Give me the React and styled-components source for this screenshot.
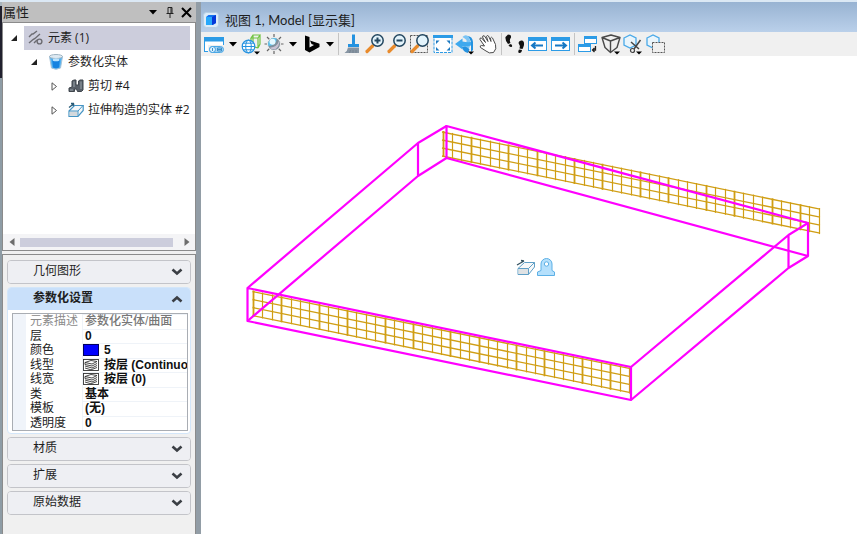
import React, { useState } from "react";
import styled, { createGlobalStyle } from "styled-components";

const GlobalStyle = createGlobalStyle`
  * {
    box-sizing: border-box;
  }

  body {
    margin: 0;
    background: #ffffff;
    font-family: "Open Sans", "Noto Sans CJK SC", sans-serif;
    font-size: 12px;
    color: #1e1e1e;
  }

  button {
    padding: 0;
    border: 0;
    background: none;
    color: inherit;
    font: inherit;
  }
`;

/* ---------- tree icons ---------- */

const ElementIcon = () => (
  <svg width="16" height="16" viewBox="0 0 16 16" fill="none" stroke="#6c6c72" strokeWidth="1.4">
    <path d="M1 7 L4 4 H5 L9 1" />
    <path d="M1 13 L5 9.500 L7 8.500 L12 4" />
    <circle cx="11.500" cy="11.500" r="2.400" />
    <path d="M6 13 L9 10" />
  </svg>
);

const SolidIcon = () => (
  <svg width="16" height="16" viewBox="0 0 16 16">
    <path d="M1.500 2.500 L3.500 14 Q8 16.500 12.500 14 L14.500 2.500Z" fill="#4fb2f3" stroke="#a9c4d8" />
    <path d="M4 5 L5 13.500 Q8 15 11 13.500 L12 5Z" fill="#1583e0" />
    <ellipse cx="8" cy="2.500" rx="6.500" ry="2" fill="#dfeaf2" stroke="#9fb4c2" />
    <ellipse cx="8" cy="5.800" rx="3.500" ry="1.500" fill="#b9e4ff" />
  </svg>
);

const CutIcon = () => (
  <svg width="16" height="16" viewBox="0 0 16 16">
    <path
      d="M4 3 L6 2 H8 V7 H10.500 V3 L12 2 H15 V12 L13.500 13.500 H9.500 L8.500 11 H6.500 V13.500 H1 V10 L4 9Z"
      fill="#596069"
      stroke="#3f454c"
    />
    <path d="M6 3.500 V9 M13 3.500 V11 M2 12 H5" stroke="#9aa3ab" fill="none" />
  </svg>
);

const ExtrudeIcon = () => (
  <svg width="16" height="16" viewBox="0 0 16 16">
    <path d="M1 9 L6.500 3.500 H15.200 V8.500 L10 14.500 H1Z" fill="#f5f8fa" stroke="#4594c4" strokeWidth="1.200" />
    <path d="M1.600 9.500 H9.500 V13.900 H1.600Z" fill="#d3d8dc" />
    <path d="M1 9 H10 L15 3.500 M10 9 V14" fill="none" stroke="#4594c4" />
    <path d="M1 5.500 L6 1.500 M6 1.500 H3 M6 1.500 L5 4" stroke="#285b78" strokeWidth="1.300" fill="none" />
  </svg>
);

/* ---------- property icons ---------- */

const LayersIcon = () => (
  <svg width="16" height="12" viewBox="0 0 16 12" fill="none" stroke="#333" strokeWidth="0.900">
    <rect x="0.500" y="0.500" width="15" height="11" fill="#fff" />
    <path d="M2 3.500 L8 1.500 L14 2.500 L9 5Z M2 3.500 V5.500 L9 7 L14 4.500 M2 7 L9 9 L14 6.500 M2 9 L8 10.800 L14 8.500" />
  </svg>
);

const Chevron = ({ up }) => (
  <svg width="12" height="8" viewBox="0 0 12 8" fill="none" stroke="#3b3f45" strokeWidth="2.600">
    <path d={up ? "M1.500 6.500 L6 2.500 L10.500 6.500" : "M1.500 1.500 L6 5.500 L10.500 1.500"} />
  </svg>
);

/* ---------- toolbar icons, all on a 22px grid ---------- */

const ToolSvg = ({ children }) => (
  <svg width="22" height="22" viewBox="0 0 22 22" fill="none">
    {children}
  </svg>
);

const Corner = () => <path d="M14 18.500 H20 L17 21.500Z" fill="#000" />;

const Lens = ({ children }) => (
  <>
    <path d="M3 18.500 L8.500 13" stroke="#e98b2c" strokeWidth="3.200" strokeLinecap="round" />
    <circle cx="13.500" cy="7.500" r="5.700" fill="#e3f3fb" stroke="#22465f" strokeWidth="1.500" />
    {children}
  </>
);

const AttributesIcon = () => (
  <ToolSvg>
    <rect x="1.500" y="4.500" width="19" height="14" fill="#fff" stroke="#2c9be6" />
    <rect x="1" y="4" width="20" height="4.500" fill="#2c9be6" />
    <rect x="5" y="12" width="17" height="9" fill="#f0f0f0" />
    <rect x="6.500" y="13.500" width="14" height="6" rx="3" fill="#a7d4f3" stroke="#4aa8e6" />
    <circle cx="9.500" cy="16.500" r="3" fill="#dff1fc" stroke="#3a9fe4" />
    <path d="M9.500 15 V18 M14.500 15 V18 H18.500 V15Z M14.500 16.500 H18.500" stroke="#3a8fca" />
  </ToolSvg>
);

const DisplayStyleIcon = () => (
  <ToolSvg>
    <path
      d="M11 5 L13 2 H20 L18 5Z M11 5 V12 M18 5 V15 L20 11 V2 M13 2 V9 M11 13 L18 15"
      stroke="#70c342"
      strokeWidth="1.200"
    />
    <circle cx="8.500" cy="13.500" r="6.300" fill="#fff" stroke="#2492e0" strokeWidth="1.200" />
    <ellipse cx="8.500" cy="13.500" rx="2.800" ry="6.300" stroke="#2492e0" />
    <path d="M2.200 13.500 H14.800 M3.200 10.200 H13.800 M3.200 16.800 H13.800" stroke="#2492e0" />
    <Corner />
  </ToolSvg>
);

const SunIcon = () => (
  <ToolSvg>
    <path d="M11 1 V21 M1.500 11 H20.500 M4 4 L18 18 M18 4 L4 18" stroke="#666" strokeWidth="1.200" />
    <circle cx="11" cy="11" r="6.500" fill="#7f909c" stroke="#f0f0f0" />
    <path d="M5.500 13 A6 6 0 0 1 13.500 5.500 Q14 12 5.500 13Z" fill="#5cc4ef" />
    <circle cx="9.500" cy="8.800" r="3" fill="#e4f8ff" />
    <path d="M16 8 Q17 13 12 16.500 Q8 16.500 7 14.800 Q14 14 16 8Z" fill="#c9c1d2" />
  </ToolSvg>
);

const BingIcon = () => (
  <ToolSvg>
    <path d="M5 2.500 L9.500 4 V14.500 L14 12 L11.500 11 L10 7.500 L19.500 10.800 V14 L9.500 19.500 L5 17Z" fill="#000" />
  </ToolSvg>
);

const BrushIcon = () => (
  <ToolSvg>
    <path d="M11 1.500 H14 V11 H18 V14 H7 V11 H11Z" fill="#2492e0" />
    <path d="M7 14.500 H18 V20 H3.500 Q6.500 18 7 14.500Z" fill="#8795a3" />
    <path d="M8.500 20 L9.500 17 M12 20 V17 M15 20 V17" stroke="#74828f" />
  </ToolSvg>
);

const ZoomInIcon = () => (
  <ToolSvg>
    <Lens>
      <path d="M10.500 7.500 H16.500 M13.500 4.500 V10.500" stroke="#22465f" strokeWidth="2" />
    </Lens>
  </ToolSvg>
);

const ZoomOutIcon = () => (
  <ToolSvg>
    <Lens>
      <path d="M10.500 7.500 H16.500" stroke="#22465f" strokeWidth="2" />
    </Lens>
  </ToolSvg>
);

const WindowAreaIcon = () => (
  <ToolSvg>
    <rect x="1.500" y="2.500" width="17" height="17" stroke="#555" strokeDasharray="2 1" />
    <Lens />
  </ToolSvg>
);

const FitViewIcon = () => (
  <ToolSvg>
    <rect x="2" y="2.500" width="18" height="17" fill="#fff" stroke="#2c9be6" strokeDasharray="3 1" />
    <rect x="1" y="2" width="20" height="3" fill="#2c9be6" />
    <path
      d="M4 7.500 H7.500 L4 11Z M18 7.500 V11 L14.500 7.500Z M4 17.500 V14 L7.500 17.500Z M18 17.500 H14.500 L18 14Z"
      fill="#1c79c0"
    />
  </ToolSvg>
);

const RotateIcon = () => (
  <ToolSvg>
    <path d="M13 3 Q18.500 3 19 9 V17 L17 19 V10 Q16.500 5.500 13 3Z" fill="#2492e0" />
    <path d="M8.500 4 Q11 1 14 3 L16 7 V13 L14.500 17 L12.500 14 V7 Q11 5.500 8.500 4Z" fill="#7cc4f4" />
    <path d="M1 11 L8.500 5.500 V8.500 Q13 9.500 17 9 V12.500 Q12 14 8.500 13.500 V16.500Z" fill="#3fa9ee" />
    <path d="M8 14 Q9 19 14 20 L15.500 16.500 L12 13.500Z" fill="#2492e0" />
    <Corner />
  </ToolSvg>
);

const HandIcon = () => (
  <ToolSvg>
    <path
      d="M7.500 13 L3 6.500 Q2.500 4.500 4.500 5 L8.500 9.500 L5.500 4 Q5.500 2 7.500 3 L11 8.500 L9.500 3.500 Q10 1.800 11.500 3 L14 8.500 L13.500 5 Q14.500 3.500 15.500 5 L18.500 11.500 Q20 16 16.500 19.500 Q12 21 9 18 L3.500 14.500 Q2.500 12.500 4.500 12.500Z"
      fill="#fff"
      stroke="#4a4a4a"
    />
  </ToolSvg>
);

const WalkIcon = () => (
  <ToolSvg>
    <path d="M4 1.500 Q7.500 1.500 7 4.500 Q5 7 6.500 10 L4 11 Q1 8 1.500 4Z" fill="#111" />
    <path d="M4.500 12 L7 11 Q9 13 7.500 14 Q5.500 14.500 4.500 12Z" fill="#111" />
    <path d="M17 7.500 Q20.500 7 20 12 Q19.500 14 18.500 16 L15.500 15.500 Q16.500 12.500 14.500 10 Q14.500 8 17 7.500Z" fill="#111" />
    <path d="M15 16.500 L18 17 Q17.500 20.500 15 20 Q13.500 19 15 16.500Z" fill="#111" />
  </ToolSvg>
);

const ViewStepIcon = ({ next }) => (
  <ToolSvg>
    <rect x="1.500" y="4.500" width="18" height="13" fill="#fff" stroke="#2c9be6" />
    <rect x="1" y="4" width="19" height="4" fill="#2c9be6" />
    <path
      d={next ? "M5 12.500 H16 M12.500 9.500 L16 12.500 L12.500 15.500" : "M16 12.500 H5 M8.500 9.500 L5 12.500 L8.500 15.500"}
      stroke="#1678c4"
      strokeWidth="2"
    />
  </ToolSvg>
);

const CopyViewIcon = () => (
  <ToolSvg>
    <rect x="7.500" y="3.500" width="12" height="7" fill="#fff" stroke="#2c9be6" />
    <rect x="7" y="3" width="13" height="3" fill="#2c9be6" />
    <rect x="1.500" y="11.500" width="12" height="7" fill="#fff" stroke="#2c9be6" />
    <rect x="1" y="11" width="13" height="3" fill="#2c9be6" />
    <path d="M18.500 13 V17 H16 M17.500 15 L15.500 17 L17.500 19" stroke="#222" strokeWidth="1.300" />
  </ToolSvg>
);

const PerspectiveIcon = () => (
  <ToolSvg>
    <path
      d="M2 4.500 L11 2 L20 4.500 L10.500 8Z M2 4.500 L5 14.500 L10.500 19.500 L17 14.500 L20 4.500 M10.500 8 V19.500"
      stroke="#494949"
      strokeWidth="1.400"
      strokeLinejoin="round"
    />
    <Corner />
  </ToolSvg>
);

const ClipVolumeIcon = () => (
  <ToolSvg>
    <path d="M2 5 L8 2 L14 5 V12 L8 15 L2 12Z" fill="#e9f5fc" stroke="#4aa9e8" strokeWidth="1.300" />
    <path d="M18.500 7 L12 16 M9 9 L17 16" stroke="#444" strokeWidth="1.500" />
    <circle cx="10.500" cy="17.500" r="2" stroke="#444" strokeWidth="1.200" />
    <Corner />
  </ToolSvg>
);

const ClipMaskIcon = () => (
  <ToolSvg>
    <path d="M2 5 L8 2 L14 5 V12 L8 15 L2 12Z" fill="#e9f5fc" stroke="#4aa9e8" strokeWidth="1.300" />
    <rect x="7.500" y="9.500" width="12" height="10" fill="#f0f0f0" stroke="#555" strokeDasharray="2 1" />
  </ToolSvg>
);

const Caret = () => (
  <svg width="8" height="5" viewBox="0 0 8 5">
    <path d="M0 0 H8 L4 4.500Z" fill="#000" />
  </svg>
);

/* ---------- data ---------- */

const treeRows = [
  { level: 0, label: "元素 (1)", icon: <ElementIcon />, open: true, selected: true },
  { level: 1, label: "参数化实体", icon: <SolidIcon />, open: true },
  { level: 2, label: "剪切 #4", icon: <CutIcon /> },
  { level: 2, label: "拉伸构造的实体 #2", icon: <ExtrudeIcon /> },
];

const properties = [
  { name: "元素描述", value: "参数化实体/曲面", readOnly: true },
  { name: "层", value: "0" },
  { name: "颜色", value: "5", swatch: true },
  { name: "线型", value: "按层 (Continuo", layers: true },
  { name: "线宽", value: "按层 (0)", layers: true },
  { name: "类", value: "基本" },
  { name: "模板", value: "(无)" },
  { name: "透明度", value: "0" },
];

const navTools = [
  ["更新视图", <BrushIcon />],
  ["放大", <ZoomInIcon />],
  ["缩小", <ZoomOutIcon />],
  ["窗口区域", <WindowAreaIcon />],
  ["全景视图", <FitViewIcon />],
  ["旋转视图", <RotateIcon />],
  ["平移视图", <HandIcon />],
];

const stepTools = [
  ["漫游", <WalkIcon />],
  ["上一视图", <ViewStepIcon />],
  ["下一视图", <ViewStepIcon next />],
];

const clipTools = [
  ["复制视图", <CopyViewIcon />],
  ["更改视图透视", <PerspectiveIcon />],
  ["剪切立方体", <ClipVolumeIcon />],
  ["剪切遮罩", <ClipMaskIcon />],
];

/* ---------- model ---------- */

// sheared grid of reinforcement, 40 columns by 3 rows
function Mesh({ x, y }) {
  const dx = 9.4;
  const slope = 0.205;
  const width = dx * 40;
  const columns = Array.from({ length: 41 }, (_, i) => i);
  return (
    <g stroke="#d09e14" fill="none">
      {columns.map((i) => {
        const cx = Math.floor(x + i * dx) + 0.5;
        const top = y + i * dx * slope - 1;
        const line = `M${cx} ${top} v26`;
        return (
          <g key={i}>
            {(i % 7 === 0 || i % 7 === 3) && <path d={line} strokeWidth="3" opacity="0.35" />}
            <path d={line} strokeWidth="1.200" />
          </g>
        );
      })}
      {[0, 8, 16, 24].map((dy) => (
        <path key={dy} d={`M${x - 1} ${y + dy} l${width + 2} ${width * slope}`} strokeWidth="1.300" />
      ))}
    </g>
  );
}

function Model() {
  return (
    <Drawing viewBox="201 56 656 478" preserveAspectRatio="xMinYMin meet">
      <Mesh x={443} y={132} />
      <Mesh x={253.5} y={291.5} />
      <g stroke="#ff00ff" strokeWidth="2.200" fill="none" strokeLinejoin="round">
        <path d="M247.500 288 L631 367 V400 L247.500 321Z" />
        <path d="M446.500 126 L808 223 V256 L446.500 158Z" />
        <path d="M247.500 288 L418 143 L446.500 126 M247.500 321 L418 176 L446.500 158 M418 143 V176" />
        <path d="M631 367 L788.500 235 L808 223 M631 400 L788.500 268 L808 256 M788.500 235 V268" />
      </g>
      <g stroke="#5f9fc6" strokeLinejoin="round">
        <path d="M518 268.500 L524.500 262.500 H534.500 V267 L528.500 274.500 H518Z" fill="#f7f8f9" />
        <path d="M518.500 269 H528 V274 H518.500Z" fill="#dfe2e4" stroke="none" />
        <path d="M518 268.500 H528.500 L534.500 262.500 M528.500 268.500 V274.500" fill="none" />
        <path d="M517 265 L524 261 M524 261 L521 260.500" stroke="#34515f" strokeWidth="1.300" fill="none" />
        <path
          d="M537.500 275.500 V272 L541 270.500 V264 A5.500 5.500 0 0 1 552 264 V270.500 L554.500 272 V275.500Z"
          fill="#b5e0fc"
          stroke="#5cb0e6"
        />
        <circle cx="546.500" cy="264" r="2.200" fill="#fff" stroke="#5cb0e6" />
      </g>
    </Drawing>
  );
}

function ToolSet({ width, items }) {
  return (
    <ToolGrid $width={width} $count={items.length}>
      {items.map(([label, icon]) => (
        <ToolButton key={label} aria-label={label}>
          {icon}
        </ToolButton>
      ))}
    </ToolGrid>
  );
}

function Group({ title, children }) {
  const [open, setOpen] = useState(Boolean(children));
  return (
    <GroupBox $open={open}>
      <GroupHeader $open={open} aria-expanded={open} onClick={() => setOpen(!open)}>
        <GroupTitle>{title}</GroupTitle>
        <Chevron up={open} />
      </GroupHeader>
      {open && children}
    </GroupBox>
  );
}

function App() {
  return (
    <Workspace>
      <GlobalStyle />
      <Edge />
      <Sidebar>
        <PanelHeader>
          <PanelTitle>属性</PanelTitle>
          <PanelButton aria-label="菜单">
            <Caret />
          </PanelButton>
          <PanelButton aria-label="固定">
            <svg width="8" height="12" viewBox="0 0 8 12" fill="none" stroke="#222">
              <path d="M2 7 V1.500 H6 V7 M5 1.500 V7 M0.500 7.500 H7.500 M4 8 V12" />
            </svg>
          </PanelButton>
          <PanelButton aria-label="关闭">
            <svg width="11" height="11" viewBox="0 0 11 11" stroke="#000" strokeWidth="2">
              <path d="M1 1 L10 10 M10 1 L1 10" />
            </svg>
          </PanelButton>
        </PanelHeader>

        <TreeBox>
          <Tree>
            {treeRows.map((row) => (
              <TreeRow key={row.label} $level={row.level}>
                <Expander aria-label={row.label}>
                  <svg width="8" height="9" viewBox="0 0 8 9">
                    {row.open ? (
                      <path d="M7 1 V7 H1Z" fill="#222" />
                    ) : (
                      <path d="M2 0.800 L6.500 4.500 L2 8.200Z" fill="#fff" stroke="#555" />
                    )}
                  </svg>
                </Expander>
                <TreeLabel $selected={row.selected}>
                  {row.icon}
                  <span>{row.label}</span>
                </TreeLabel>
              </TreeRow>
            ))}
          </Tree>
          <ScrollBar>
            <ScrollButton aria-label="向左滚动">
              <svg width="6" height="8" viewBox="0 0 6 8">
                <path d="M5.500 0 V8 L0.500 4Z" fill="#6d6d6d" />
              </svg>
            </ScrollButton>
            <ScrollThumb />
            <ScrollButton aria-label="向右滚动">
              <svg width="6" height="8" viewBox="0 0 6 8">
                <path d="M0.500 0 V8 L5.500 4Z" fill="#6d6d6d" />
              </svg>
            </ScrollButton>
          </ScrollBar>
        </TreeBox>

        <Groups>
          <Group title="几何图形" />
          <Group title="参数化设置">
            <TableFrame>
              <PropertyTable>
                <tbody>
                  {properties.map((p) => (
                    <tr key={p.name}>
                      <NameCell scope="row" $muted={p.readOnly}>
                        {p.name}
                      </NameCell>
                      <ValueCell $muted={p.readOnly} $icon={p.swatch || p.layers}>
                        <Value>
                          {p.swatch && <Swatch />}
                          {p.layers && <LayersIcon />}
                          <span>{p.value}</span>
                        </Value>
                      </ValueCell>
                    </tr>
                  ))}
                </tbody>
              </PropertyTable>
            </TableFrame>
          </Group>
          <Group title="材质" />
          <Group title="扩展" />
          <Group title="原始数据" />
        </Groups>
      </Sidebar>

      <View>
        <TitleBar>
          <svg width="16" height="16" viewBox="0 0 16 16">
            <rect x="0.500" y="0.500" width="15" height="15" rx="3" fill="#dcebf8" stroke="#b5cee2" />
            <path d="M3 5 L5.500 3 H13 V11 L10 13 H3Z" fill="#1473ee" />
            <path d="M3 5 H9 V13 H3Z" fill="#26a8fb" />
            <path d="M9 5 L13 3 V11 L9 13Z" fill="#0638d9" />
          </svg>
          <ViewTitle>视图 1, Model [显示集]</ViewTitle>
        </TitleBar>
        <Toolbar>
          <ToolButton aria-label="视图属性">
            <AttributesIcon />
          </ToolButton>
          <CaretButton aria-label="视图属性选项">
            <Caret />
          </CaretButton>
          <ToolButton aria-label="显示样式">
            <DisplayStyleIcon />
          </ToolButton>
          <ToolButton aria-label="亮度">
            <SunIcon />
          </ToolButton>
          <CaretButton aria-label="亮度选项">
            <Caret />
          </CaretButton>
          <ToolButton aria-label="必应地图">
            <BingIcon />
          </ToolButton>
          <CaretButton aria-label="必应地图选项">
            <Caret />
          </CaretButton>
          <Separator />
          <ToolSet width={158} items={navTools} />
          <Separator />
          <ToolSet width={68} items={stepTools} />
          <Separator />
          <ToolSet width={90} items={clipTools} />
        </Toolbar>
        <Model />
      </View>
    </Workspace>
  );
}

export default App;

const Workspace = styled.div`
  display: flex;
  min-height: 100vh;
  border-top: 2px solid #dbe8f4;
  background: #929da6;
`;

/* sliver of the window behind the docked panel */
const Edge = styled.div`
  flex: none;
  width: 2px;
  background: linear-gradient(#a9b5bd 4px, #20202e 4px, #20202e 76px, #8e9ca5 76px);
`;

const Sidebar = styled.aside`
  display: flex;
  flex-direction: column;
  flex: none;
  width: 194px;
  margin-right: 5px;
  background: #f0f0f0;
`;

const PanelHeader = styled.header`
  display: flex;
  align-items: center;
  height: 20px;
  padding: 0 1px;
  background: #bfbfbf;
`;

const PanelTitle = styled.h2`
  flex: 1;
  margin: 0;
  font-size: 13px;
  font-weight: 400;
  line-height: 16px;
`;

const PanelButton = styled.button`
  display: flex;
  align-items: center;
  justify-content: center;
  width: 17px;
  height: 18px;
`;

const TreeBox = styled.div`
  display: flex;
  flex-direction: column;
  height: 229px;
  border: 1px solid #8b8b8b;
  background: #ffffff;
`;

const Tree = styled.ul`
  flex: 1;
  margin: 0;
  padding: 3px 5px 0 0;
  list-style: none;
`;

const TreeRow = styled.li`
  display: flex;
  gap: 4px;
  height: 24px;
  padding-left: ${({ $level }) => 5 + $level * 20}px;
`;

const Expander = styled.button`
  display: flex;
  align-items: center;
  justify-content: center;
  width: 12px;
`;

const TreeLabel = styled.div`
  display: flex;
  flex: 1;
  align-items: center;
  gap: 4px;
  padding-left: 4px;
  line-height: 24px;
  white-space: nowrap;
  background: ${({ $selected }) => ($selected ? "#cccddc" : "transparent")};

  svg {
    flex: none;
  }
`;

const ScrollBar = styled.div`
  display: flex;
  align-items: center;
  height: 16px;
  background: #f4f4f6;
`;

const ScrollButton = styled.button`
  display: flex;
  align-items: center;
  justify-content: center;
  width: 17px;
  height: 16px;
`;

const ScrollThumb = styled.div`
  flex: 1;
  height: 9px;
  margin-right: 5px;
  background: #cccddc;
`;

const Groups = styled.div`
  display: flex;
  flex: 1;
  flex-direction: column;
  gap: 3px;
  margin-top: 3px;
  padding: 5px 4px;
  border: 1px solid #8b8b8b;
  border-bottom: 0;
`;

const GroupBox = styled.section`
  overflow: hidden;
  border: 1px solid ${({ $open }) => ($open ? "#d3e6f9" : "#c3c4c9")};
  border-radius: 4px;
  background: #ffffff;
`;

const GroupHeader = styled.button`
  display: flex;
  align-items: center;
  justify-content: space-between;
  width: 100%;
  height: 22px;
  padding: 0 7px 0 25px;
  background: ${({ $open }) => ($open ? "#c9e0fa" : "#eeeff3")};
  font-family: "Liberation Sans", "Noto Sans CJK SC", sans-serif;
  font-weight: ${({ $open }) => ($open ? 700 : 400)};
`;

const GroupTitle = styled.span`
  padding-bottom: 3px;
  line-height: 18px;
`;

const TableFrame = styled.div`
  margin: 3px 2px 2px 4px;
  padding-left: 13px;
  border: 1px solid #a9adb3;
  background: linear-gradient(90deg, #f0f4fa 13px, #ffffff 13px);
`;

const PropertyTable = styled.table`
  width: 100%;
  height: 116px;
  border-collapse: collapse;
  table-layout: fixed;
  font-family: "Liberation Sans", "Noto Sans CJK SC", sans-serif;
  font-size: 12px;
  line-height: 14px;
`;

const NameCell = styled.th`
  width: 56px;
  padding: 0 0 0 4px;
  color: ${({ $muted }) => ($muted ? "#8a8a8a" : "#222222")};
  font-weight: 400;
  text-align: left;
  white-space: nowrap;
`;

const ValueCell = styled.td`
  padding: 0 0 0 ${({ $icon }) => ($icon ? 1 : 3)}px;
  overflow: hidden;
  box-shadow: inset 1px 1px #eff3f8;
  color: ${({ $muted }) => ($muted ? "#777777" : "#111111")};
  font-weight: ${({ $muted }) => ($muted ? 500 : 700)};
  white-space: nowrap;
`;

const Value = styled.div`
  display: flex;
  align-items: center;
  gap: 5px;
  height: 14px;

  svg {
    flex: none;
  }
`;

const Swatch = styled.i`
  width: 16px;
  height: 12px;
  border: 1px solid #000060;
  background: #0000ff;
`;

const View = styled.main`
  display: flex;
  flex: 1;
  flex-direction: column;
  min-width: 0;
  background: #ffffff;
`;

const TitleBar = styled.header`
  display: flex;
  align-items: center;
  gap: 6px;
  height: 30px;
  padding: 6px 2px 0;
  background: linear-gradient(#98b3d2, #bad0ea);
`;

const ViewTitle = styled.h1`
  margin: 0;
  font-family: Lato, "Noto Sans CJK SC", sans-serif;
  font-size: 13px;
  font-weight: 400;
  line-height: 20px;
`;

const Toolbar = styled.div`
  display: flex;
  align-items: center;
  gap: 1px;
  height: 24px;
  padding: 0 2px;
  background: #f0f0f0;
`;

const ToolButton = styled.button`
  display: flex;
  align-items: center;
  justify-content: center;
  min-width: 22px;
  height: 22px;
`;

const CaretButton = styled.button`
  display: flex;
  align-items: center;
  justify-content: center;
  width: 13px;
  height: 22px;
`;

const Separator = styled.span`
  width: 1px;
  height: 22px;
  margin: 0 1px;
  background: #c4c4c4;
`;

const ToolGrid = styled.div`
  display: grid;
  grid-template-columns: repeat(${({ $count }) => $count}, 1fr);
  width: ${({ $width }) => $width}px;
`;

const Drawing = styled.svg`
  display: block;
  width: 100%;
`;
